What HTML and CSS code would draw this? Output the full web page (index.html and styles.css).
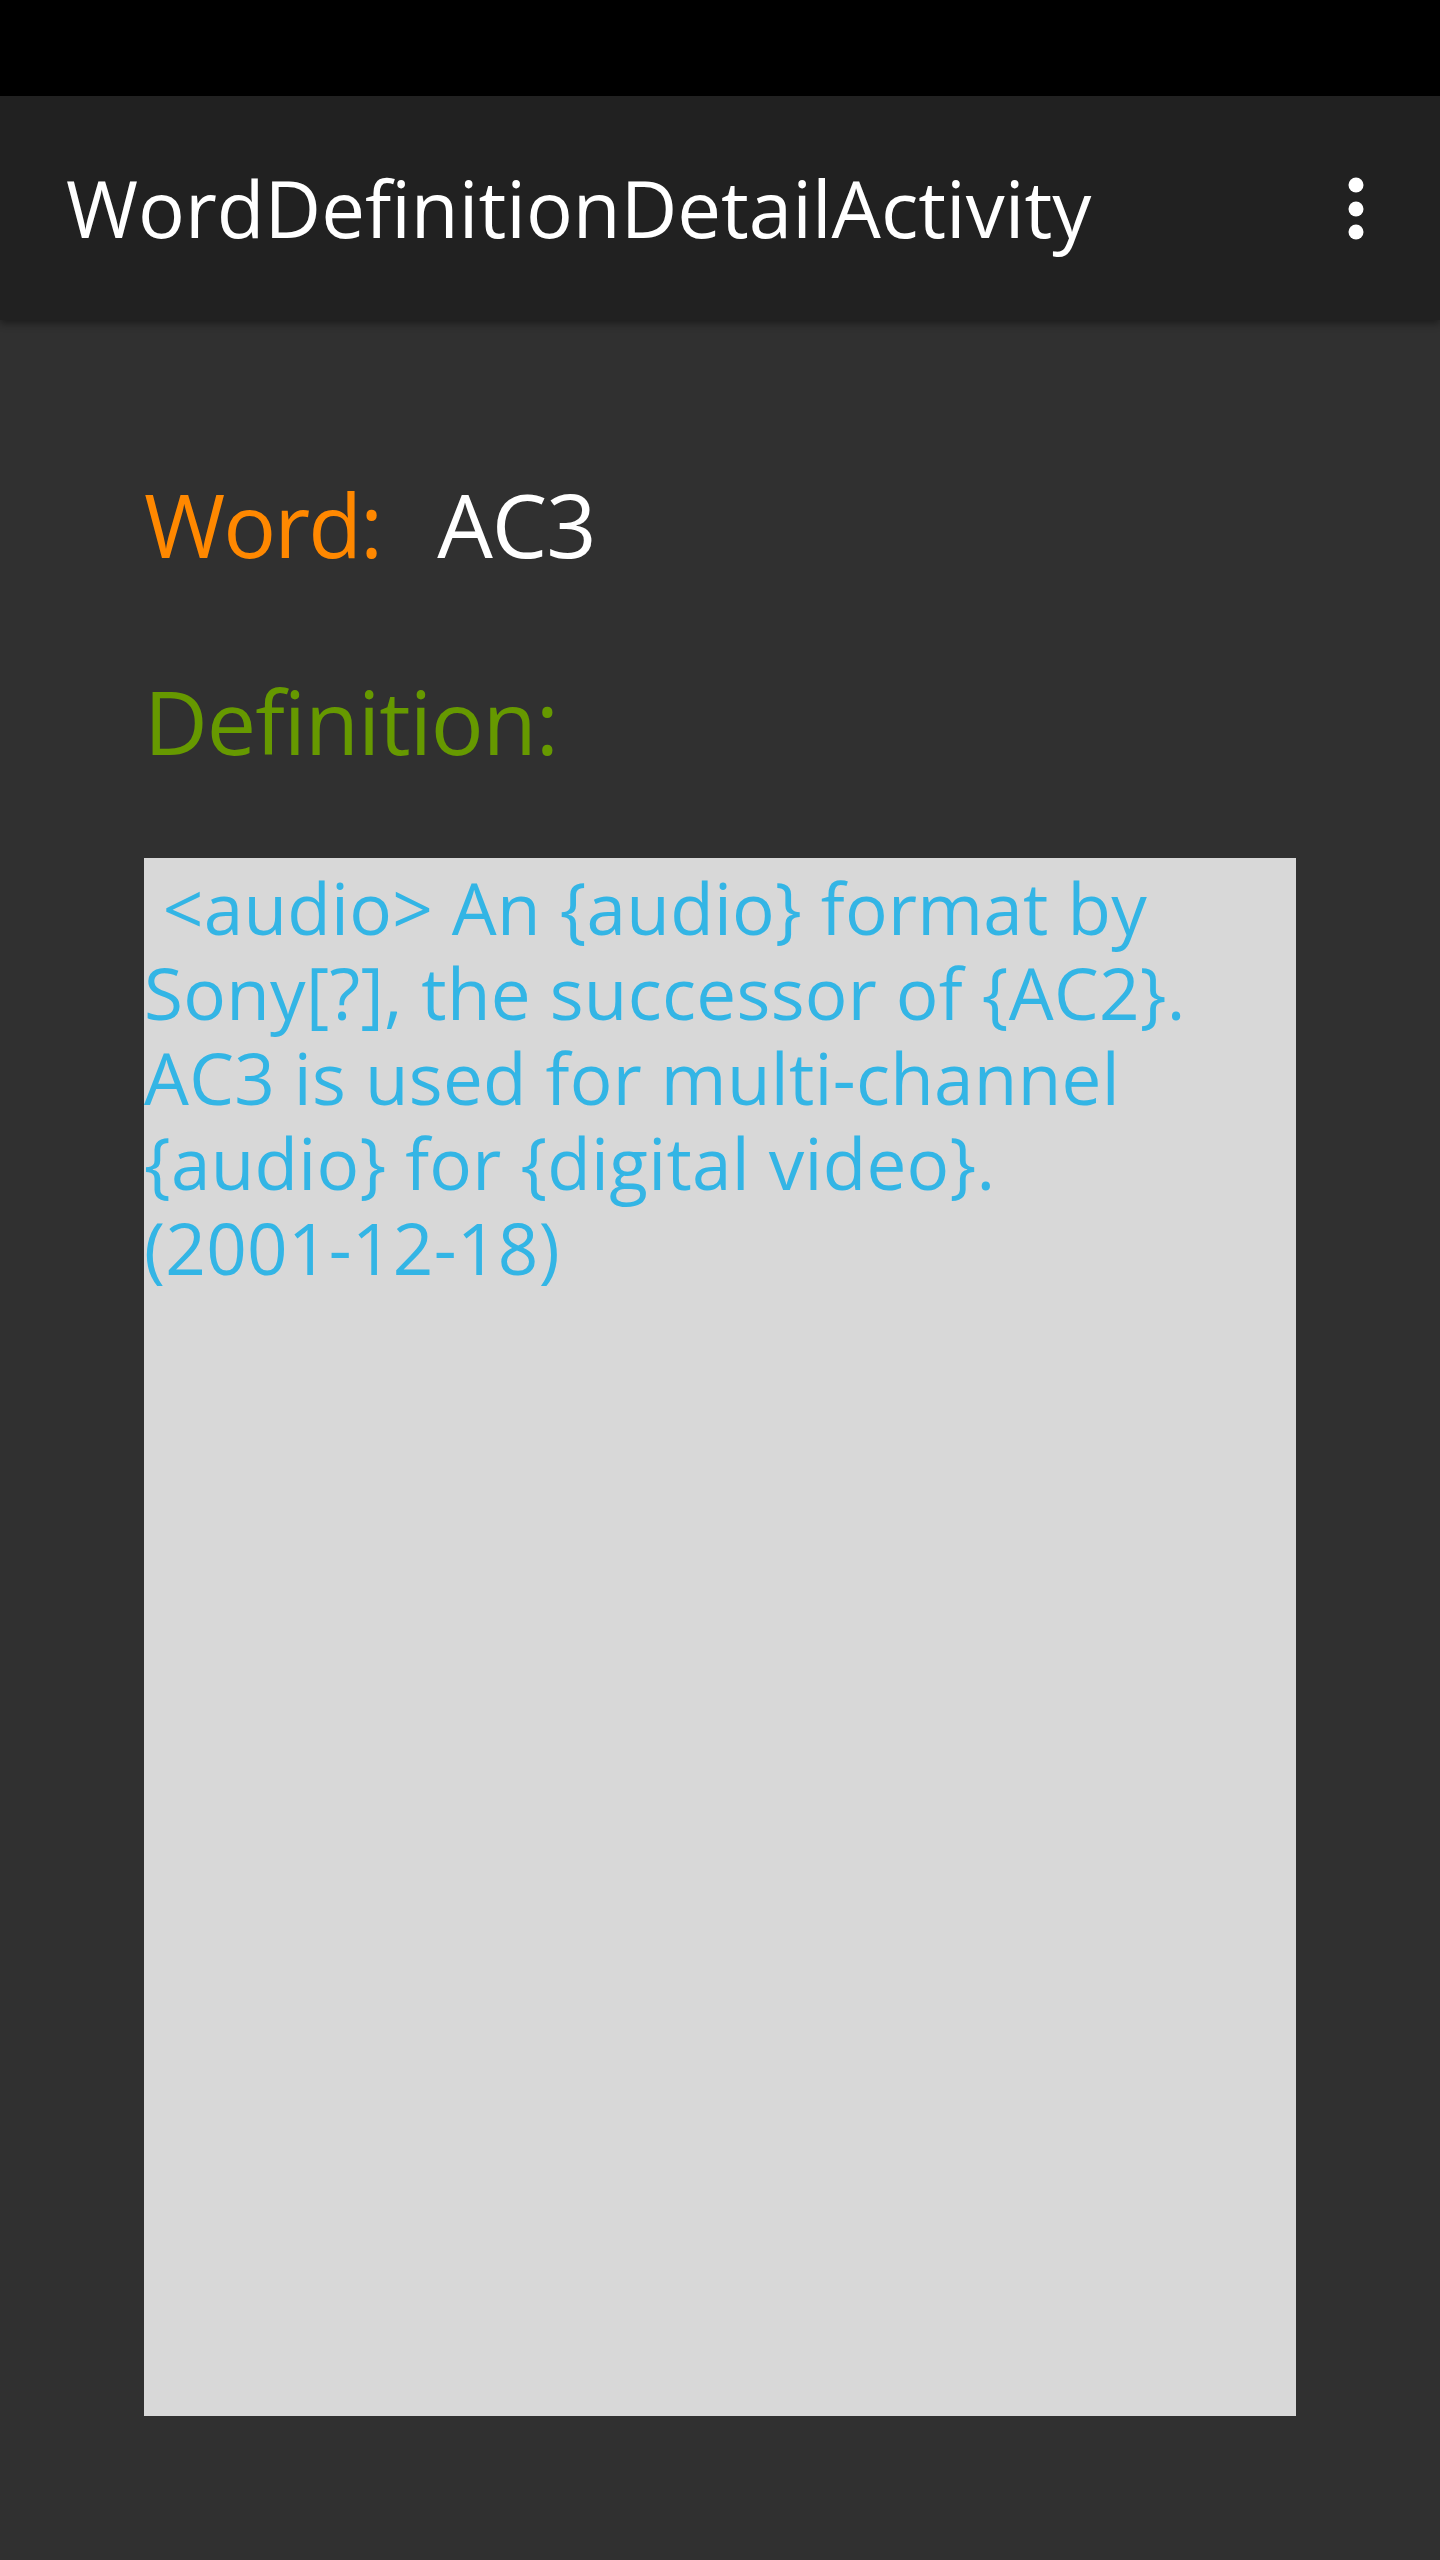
FILE: index.html
```html
<!DOCTYPE html>
<html>
<head>
<meta charset="utf-8">
<link rel="stylesheet" href="styles.css">
</head>
<body>
<div class="status-bar"></div>
<header class="toolbar">
  <h1 class="title">WordDefinitionDetailActivity</h1>
  <div class="overflow">
    <svg width="16" height="64" viewBox="0 0 16 64"><circle cx="8" cy="9" r="7.5" fill="#fff"/><circle cx="8" cy="33" r="7.5" fill="#fff"/><circle cx="8" cy="56" r="7.5" fill="#fff"/></svg>
  </div>
</header>
<main class="content">
  <div class="word-row">
    <span class="label-word">Word:</span>
    <span class="word-value">AC3</span>
  </div>
  <div class="label-def">Definition:</div>
  <div class="def-box"><p class="def-text">&nbsp;&lt;audio&gt; An {audio} format by<br>Sony[?], the successor of {AC2}.<br>AC3 is used for multi-channel<br>{audio} for {digital video}.<br>(2001-12-18)</p></div>
</main>
</body>
</html>
```

FILE: styles.css
```css
html, body {
  margin: 0;
  padding: 0;
  background: #303030;
  font-family: "Open Sans", "Noto Sans", sans-serif;
}
.status-bar {
  height: 96px;
  background: #000;
}
.toolbar {
  height: 224px;
  background: #212121;
  display: flex;
  align-items: center;
  justify-content: space-between;
  padding: 0 76px 0 66px;
  box-shadow: 0 3px 8px rgba(0, 0, 0, 0.45);
  position: relative;
}
.title {
  margin: 0;
  font-weight: 400;
  font-size: 78px;
  line-height: 1;
  color: #fff;
  letter-spacing: 0;
}
.overflow {
  display: flex;
}
.content {
  padding: 0 144px;
}
.word-row {
  display: flex;
  gap: 56px;
  padding-top: 144px;
  font-size: 88px;
  line-height: 120px;
}
.label-word { color: #ff8800; letter-spacing: -2px; }
.word-value { color: #fff; letter-spacing: -1px; }
.label-def {
  color: #669900;
  font-size: 88px;
  line-height: 120px;
  margin-top: 77px;
  letter-spacing: -1px;
}
.def-box {
  margin-top: 77px;
  height: 1558px;
  background: #d8d8d8;
  padding-top: 7px;
  box-sizing: border-box;
}
.def-text {
  margin: 0;
  color: #33b5e5;
  font-size: 71px;
  line-height: 85px;
  letter-spacing: 0.3px;
  white-space: nowrap;
}
```
